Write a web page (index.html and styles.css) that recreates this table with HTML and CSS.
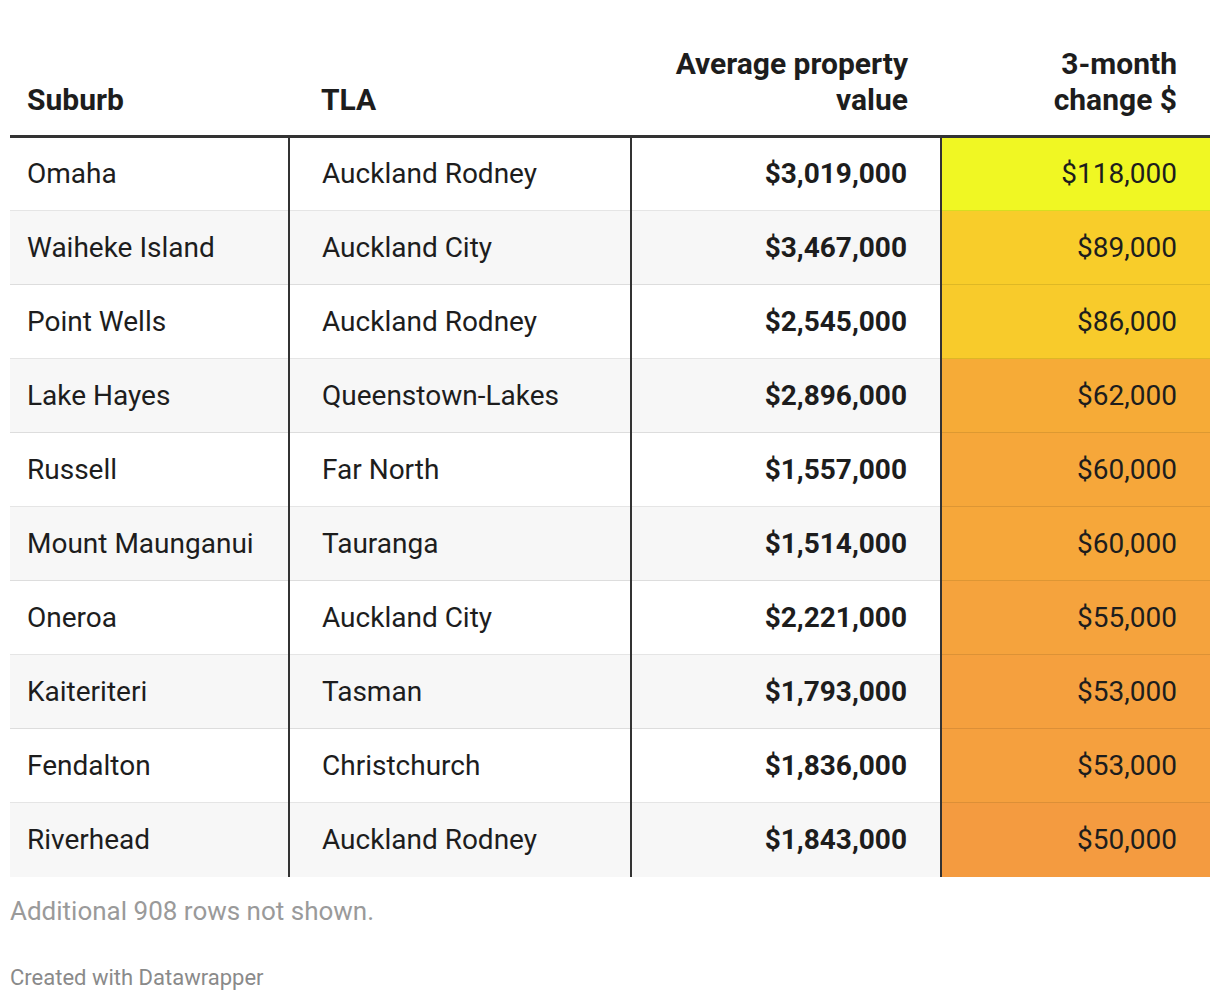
FILE: index.html
```html
<!DOCTYPE html>
<html>
<head>
<meta charset="utf-8">
<link rel="stylesheet" href="styles.css">
</head>
<body>
<div class="chart">
  <table class="dw-table">
    <colgroup>
      <col class="c1"><col class="c2"><col class="c3"><col class="c4">
    </colgroup>
    <thead>
      <tr>
        <th class="col-suburb">Suburb</th>
        <th class="col-tla">TLA</th>
        <th class="col-num">Average property<br>value</th>
        <th class="col-chg">3-month<br>change $</th>
      </tr>
    </thead>
    <tbody>
      <tr><td class="col-suburb">Omaha</td><td class="col-tla">Auckland Rodney</td><td class="col-num">$3,019,000</td><td class="col-chg" style="background:#f0f723">$118,000</td></tr>
      <tr><td class="col-suburb">Waiheke Island</td><td class="col-tla">Auckland City</td><td class="col-num">$3,467,000</td><td class="col-chg" style="background:#f8cd2a">$89,000</td></tr>
      <tr><td class="col-suburb">Point Wells</td><td class="col-tla">Auckland Rodney</td><td class="col-num">$2,545,000</td><td class="col-chg" style="background:#f8cb2b">$86,000</td></tr>
      <tr><td class="col-suburb">Lake Hayes</td><td class="col-tla">Queenstown-Lakes</td><td class="col-num">$2,896,000</td><td class="col-chg" style="background:#f6ab37">$62,000</td></tr>
      <tr><td class="col-suburb">Russell</td><td class="col-tla">Far North</td><td class="col-num">$1,557,000</td><td class="col-chg" style="background:#f6a73a">$60,000</td></tr>
      <tr><td class="col-suburb">Mount Maunganui</td><td class="col-tla">Tauranga</td><td class="col-num">$1,514,000</td><td class="col-chg" style="background:#f6a73a">$60,000</td></tr>
      <tr><td class="col-suburb">Oneroa</td><td class="col-tla">Auckland City</td><td class="col-num">$2,221,000</td><td class="col-chg" style="background:#f5a33d">$55,000</td></tr>
      <tr><td class="col-suburb">Kaiteriteri</td><td class="col-tla">Tasman</td><td class="col-num">$1,793,000</td><td class="col-chg" style="background:#f5a03e">$53,000</td></tr>
      <tr><td class="col-suburb">Fendalton</td><td class="col-tla">Christchurch</td><td class="col-num">$1,836,000</td><td class="col-chg" style="background:#f5a03e">$53,000</td></tr>
      <tr><td class="col-suburb">Riverhead</td><td class="col-tla">Auckland Rodney</td><td class="col-num">$1,843,000</td><td class="col-chg" style="background:#f49b40">$50,000</td></tr>
    </tbody>
  </table>
  <p class="notes">Additional 908 rows not shown.</p>
  <p class="credit">Created with Datawrapper</p>
</div>
</body>
</html>
```

FILE: styles.css
```css
html, body {
  margin: 0;
  padding: 0;
  background: #ffffff;
}

body {
  font-family: Roboto, "Liberation Sans", sans-serif;
  color: #1d1d1d;
}

.chart {
  padding: 0 10px;
}

.dw-table {
  width: 1200px;
  border-collapse: collapse;
  table-layout: fixed;
  margin-top: 46px;
}

.c1 { width: 279px; }
.c2 { width: 342px; }
.c3 { width: 310px; }
.c4 { width: 269px; }

.dw-table th {
  font-size: 30px;
  font-weight: 700;
  line-height: 36px;
  vertical-align: bottom;
  padding: 0 33px 17px 32px;
  border-bottom: 3px solid #333333;
  text-align: left;
}

.dw-table td {
  font-size: 28px;
  line-height: 36px;
  height: 74px;
  box-sizing: border-box;
  padding: 0 33px 0 32px;
  vertical-align: middle;
  border-bottom: 1px solid rgba(0, 0, 0, 0.1);
}

.dw-table tbody tr:last-child td {
  border-bottom: none;
}

.dw-table tbody tr:nth-child(even) td {
  background: #f7f7f7;
}

.dw-table .col-suburb {
  padding-left: 17px;
}

.dw-table td.col-tla,
.dw-table td.col-num,
.dw-table td.col-chg {
  border-left: 2px solid #333333;
}

.dw-table .col-num {
  text-align: right;
  padding-right: 33px;
}

.dw-table td.col-num {
  font-weight: 700;
}

.dw-table .col-chg {
  text-align: right;
  padding-right: 33px;
}

.notes {
  margin: 19px 0 0;
  font-size: 26px;
  line-height: 30px;
  color: #9a9a9a;
}

.credit {
  margin: 38px 0 0;
  font-size: 22px;
  line-height: 28px;
  color: #8a8a8a;
}
```
